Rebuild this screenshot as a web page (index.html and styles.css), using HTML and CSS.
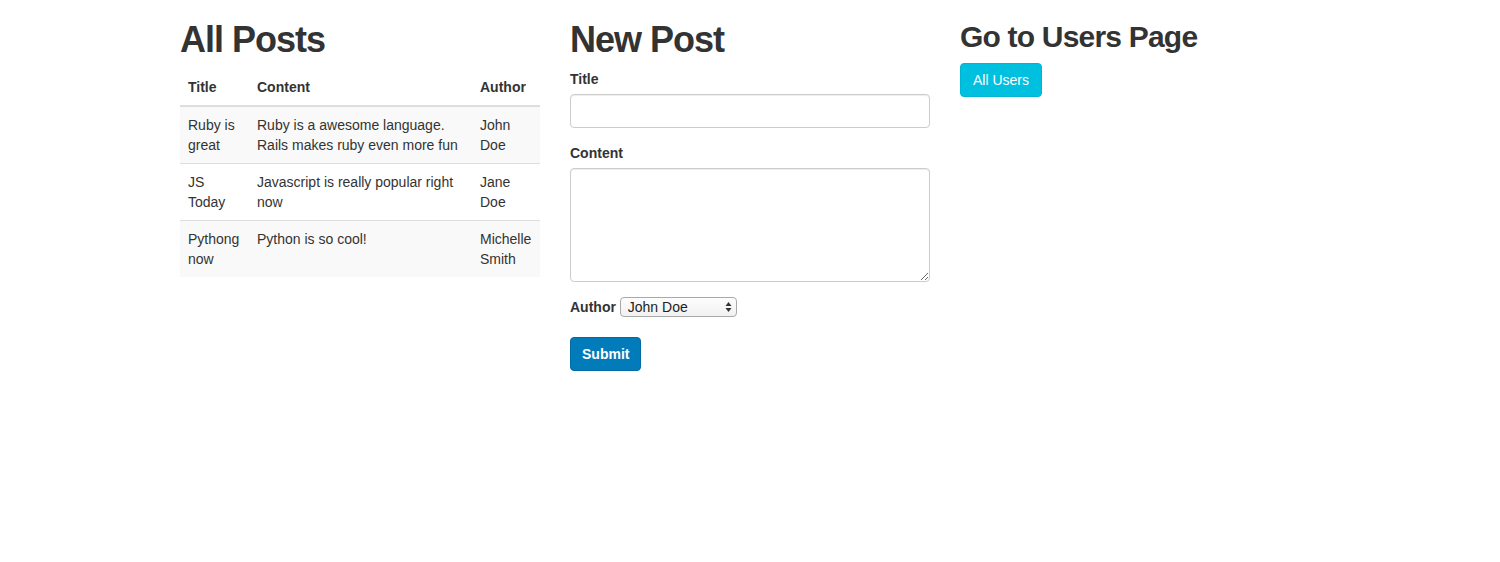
FILE: index.html
```html
<!DOCTYPE html>
<html>
<head>
<meta charset="utf-8">
<title>Posts</title>
<link rel="stylesheet" href="styles.css">
</head>
<body>
<div class="container">
  <div class="row">
    <div class="col">
      <h1>All Posts</h1>
      <table class="table">
        <colgroup>
          <col class="col-title">
          <col class="col-content">
          <col class="col-author">
        </colgroup>
        <thead>
          <tr><th>Title</th><th>Content</th><th>Author</th></tr>
        </thead>
        <tbody>
          <tr class="odd"><td>Ruby is great</td><td>Ruby is a awesome language. Rails makes ruby even more fun</td><td>John Doe</td></tr>
          <tr><td>JS Today</td><td>Javascript is really popular right now</td><td>Jane Doe</td></tr>
          <tr class="odd"><td>Pythong now</td><td>Python is so cool!</td><td>Michelle Smith</td></tr>
        </tbody>
      </table>
    </div>
    <div class="col">
      <h1>New Post</h1>
      <form>
        <div class="form-group">
          <label class="label">Title</label>
          <input class="form-control" type="text">
        </div>
        <div class="form-group">
          <label class="label">Content</label>
          <textarea class="form-control" rows="5"></textarea>
        </div>
        <div class="form-group">
          <label class="label">Author</label>
          <span class="select-wrap">
            <select class="select">
              <option>John Doe</option>
              <option>Jane Doe</option>
              <option>Michelle Smith</option>
            </select>
            <svg class="select-arrows" width="7" height="12" viewBox="0 0 7 12"><path d="M3.5 1 L6.5 5 H0.5 Z M3.5 11 L6.5 7 H0.5 Z" fill="#333"/></svg>
          </span>
        </div>
        <button type="button" class="btn btn-primary">Submit</button>
      </form>
    </div>
    <div class="col">
      <h2>Go to Users Page</h2>
      <a class="btn btn-info">All Users</a>
    </div>
  </div>
</div>
</body>
</html>
```
FILE: styles.css
```css
* { box-sizing: border-box; }
html, body { margin: 0; padding: 0; background: #fff; }
body {
  font-family: "Liberation Sans", Arial, Helvetica, sans-serif;
  font-size: 14px;
  line-height: 1.42857143;
  color: #333;
}
.container {
  width: 1170px;
  margin: 0 auto;
  padding: 0 15px;
}
.row {
  display: flex;
  margin: 0 -15px;
}
.col {
  width: 390px;
  padding: 0 15px;
}
h1, h2 {
  font-weight: bold;
  margin: 20px 0 10px;
  color: #333;
}
h1 {
  font-size: 36px;
  line-height: 39px;
  letter-spacing: -1px;
}
h2 {
  font-size: 30px;
  line-height: 33px;
  letter-spacing: -0.8px;
}
.table {
  width: 100%;
  table-layout: fixed;
  border-collapse: collapse;
  border-spacing: 0;
  margin-bottom: 20px;
}
.col-title { width: 69px; }
.col-content { width: 223px; }
.col-author { width: 68px; }
.table th, .table td {
  padding: 8px;
  text-align: left;
  line-height: 1.42857143;
}
.table th {
  vertical-align: bottom;
  font-weight: bold;
  border-bottom: 2px solid #ddd;
}
.table td {
  vertical-align: top;
  border-top: 1px solid #ddd;
}
.table tr.odd td { background: #f9f9f9; }
.form-group { margin-bottom: 15px; }
.label {
  display: inline-block;
  max-width: 100%;
  margin-bottom: 5px;
  font-weight: bold;
}
.form-control {
  display: block;
  width: 100%;
  padding: 6px 12px;
  font-family: inherit;
  font-size: 14px;
  line-height: 1.42857143;
  color: #555;
  background: #fff;
  border: 1px solid #ccc;
  border-radius: 4px;
  box-shadow: inset 0 1px 1px rgba(0,0,0,.075);
  margin: 0;
}
input.form-control { height: 34px; }
textarea.form-control { height: 114px; }
.select-wrap {
  position: relative;
  display: inline-block;
  vertical-align: top;
}
.select {
  -webkit-appearance: none;
  appearance: none;
  width: 117px;
  height: 20px;
  padding: 0 16px 0 7px;
  font-family: inherit;
  font-size: 14px;
  line-height: 18px;
  color: #222;
  border: 1px solid #a9a9a9;
  border-radius: 4px;
  background: linear-gradient(#fdfdfd, #f1f1f1);
  margin: 0;
}
.select-arrows {
  position: absolute;
  right: 5px;
  top: 4px;
  pointer-events: none;
}
.btn {
  display: inline-block;
  padding: 6px 12px;
  font-family: inherit;
  font-size: 14px;
  line-height: 1.42857143;
  border: 1px solid transparent;
  border-radius: 4px;
  color: #fff;
  text-decoration: none;
  cursor: pointer;
  margin: 0;
}
.btn-primary {
  background: #027bba;
  border-color: #026ba3;
  font-weight: bold;
  padding: 6px 11px;
}
.btn-info {
  background: #00c0e0;
  border-color: #00b5d4;
}
```
